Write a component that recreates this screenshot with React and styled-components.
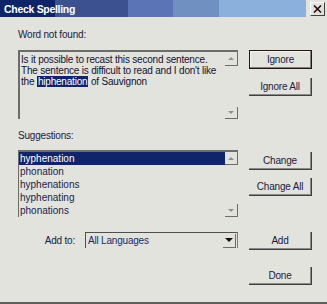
import React from "react";
import styled, { createGlobalStyle } from "styled-components";

const Global = createGlobalStyle`
  html, body { margin: 0; padding: 0; background: #e1e3dc; }
  body { font-family: "Liberation Sans", Arial, sans-serif; }
  * { box-sizing: border-box; }
`;

const Window = styled.div`
  width: 327px;
  height: 304px;
  background: #e1e3dc;
  border-bottom: 2px solid #5e5e5e;
  display: flex;
  flex-direction: column;
  color: #1a1a3c;
  font-size: 10px;
  letter-spacing: -0.2px;
`;

const TitleRow = styled.div`
  display: flex;
  align-items: flex-start;
  height: 17px;
`;

const TitleBar = styled.div`
  width: 306px;
  height: 17px;
  display: flex;
  align-items: center;
  padding-left: 4px;
  color: #fff;
  font-weight: bold;
  font-size: 10.5px;
  letter-spacing: -0.3px;
  background: linear-gradient(
    to right,
    #0e2468 0px, #0e2468 55px,
    #3b5190 55px, #3b5190 128px,
    #5a74b6 128px, #5a74b6 173px,
    #7190c2 173px, #7190c2 219px,
    #8cb0dc 219px, #8cb0dc 306px
  );
`;

const CloseBtn = styled.div`
  margin-left: 4px;
  margin-top: 2px;
  width: 15px;
  height: 14px;
  border: 1px solid;
  border-color: #ffffff #404040 #404040 #ffffff;
  display: flex;
  align-items: center;
  justify-content: center;
`;

const Body = styled.div`
  display: flex;
  flex-direction: column;
  padding-left: 18px;
`;

const Label = styled.div`
  height: 12px;
  line-height: 12px;
  margin-top: ${(p) => p.$mt}px;
  white-space: nowrap;
`;

const Section = styled.div`
  display: flex;
  gap: 11px;
  margin-top: ${(p) => p.$mt}px;
`;

const TextBox = styled.div`
  width: 220px;
  height: 69px;
  border-top: 2px solid #6c6c6c;
  border-left: 2px solid #6c6c6c;
  display: flex;
`;

const TextContent = styled.div`
  flex: 1;
  padding: 2px 0 0 1px;
  line-height: 11px;
  color: #121230;
`;

const Mark = styled.span`
  background: #10246a;
  color: #fff;
  padding: 0 1px;
`;

const ScrollCol = styled.div`
  width: 13px;
  display: flex;
  flex-direction: column;
  justify-content: space-between;
`;

const ScrollBtn = styled.div`
  height: ${(p) => p.$h}px;
  border-right: 1px solid #6c6c6c;
  border-bottom: 1px solid #6c6c6c;
  display: flex;
  align-items: center;
  justify-content: center;
`;

const Arrow = styled.div`
  width: 0;
  height: 0;
  border-left: ${(p) => p.$s || 3}px solid transparent;
  border-right: ${(p) => p.$s || 3}px solid transparent;
  ${(p) =>
    p.$down
      ? `border-top: ${p.$s || 3}px solid ${p.$c || "#909090"};`
      : `border-bottom: ${p.$s || 3}px solid ${p.$c || "#909090"};`}
`;

const ButtonCol = styled.div`
  width: 63px;
  display: flex;
  flex-direction: column;
  gap: ${(p) => p.$gap}px;
  padding-top: ${(p) => p.$pt || 0}px;
`;

const Button = styled.div`
  width: 63px;
  height: ${(p) => (p.$default ? 19 : 18)}px;
  display: flex;
  align-items: center;
  justify-content: center;
  color: #1a1a44;
  border-right: 1px solid #404040;
  border-bottom: 1px solid #404040;
  box-shadow: inset -1px -1px 0 #8a8a8a;
  ${(p) =>
    p.$default &&
    `border: 1px solid #2a1212; box-shadow: inset -1px -1px 0 #808080, inset 1px 1px 0 #f4f4f4;`}
`;

const List = styled.div`
  width: 220px;
  height: 67px;
  border-top: 2px solid #6c6c6c;
  border-left: 1px solid #6c6c6c;
  display: flex;
`;

const Rows = styled.div`
  flex: 1;
  display: flex;
  flex-direction: column;
`;

const Row = styled.div`
  height: 13px;
  line-height: 13px;
  padding-left: 1px;
  letter-spacing: 0;
  color: ${(p) => (p.$sel ? "#ffffff" : "#1c1c50")};
  background: ${(p) => (p.$sel ? "#10246a" : "transparent")};
`;

const AddRow = styled.div`
  display: flex;
  gap: 11px;
  margin-top: 15px;
`;

const AddLeft = styled.div`
  width: 220px;
  display: flex;
  align-items: flex-start;
  justify-content: flex-end;
  gap: 10px;
`;

const AddLabel = styled.div`
  height: 16px;
  line-height: 17px;
`;

const Select = styled.div`
  width: 153px;
  height: 16px;
  border-top: 1px solid #505050;
  border-left: 1px solid #505050;
  border-right: 1px solid #808080;
  display: flex;
  align-items: center;
`;

const SelectText = styled.div`
  flex: 1;
  padding-left: 2px;
  color: #1c2a6a;
`;

const DropBtn = styled.div`
  width: 13px;
  height: 14px;
  margin-right: 1px;
  border-right: 1px solid #6c6c6c;
  border-bottom: 1px solid #6c6c6c;
  display: flex;
  align-items: center;
  justify-content: center;
`;

const DoneRow = styled.div`
  display: flex;
  padding-left: 231px;
  margin-top: 17px;
`;

export default function App() {
  const suggestions = ["hyphenation", "phonation", "hyphenations", "hyphenating", "phonations"];
  return (
    <>
      <Global />
      <Window>
        <TitleRow>
          <TitleBar>Check Spelling</TitleBar>
          <CloseBtn>
            <svg width="9" height="8" viewBox="0 0 9 8">
              <path d="M1 0.5 L8 7.5 M8 0.5 L1 7.5" stroke="#2a0a0a" strokeWidth="1.6" />
            </svg>
          </CloseBtn>
        </TitleRow>
        <Body>
          <Label $mt={12}>Word not found:</Label>
          <Section $mt={9}>
            <TextBox>
              <TextContent>
                Is it possible to recast this second sentence.
                <br />
                The sentence is difficult to read and I don't like
                <br />
                the <Mark>hiphenation</Mark> of Sauvignon
              </TextContent>
              <ScrollCol>
                <ScrollBtn $h={14}>
                  <Arrow />
                </ScrollBtn>
                <ScrollBtn $h={12}>
                  <Arrow $down />
                </ScrollBtn>
              </ScrollCol>
            </TextBox>
            <ButtonCol $gap={9}>
              <Button $default>Ignore</Button>
              <Button>Ignore All</Button>
            </ButtonCol>
          </Section>
          <Label $mt={11}>Suggestions:</Label>
          <Section $mt={8}>
            <List>
              <Rows>
                {suggestions.map((s, i) => (
                  <Row key={s} $sel={i === 0}>
                    {s}
                  </Row>
                ))}
              </Rows>
              <ScrollCol>
                <ScrollBtn $h={13}>
                  <Arrow />
                </ScrollBtn>
                <ScrollBtn $h={13}>
                  <Arrow $down />
                </ScrollBtn>
              </ScrollCol>
            </List>
            <ButtonCol $gap={8} $pt={2}>
              <Button>Change</Button>
              <Button>Change All</Button>
            </ButtonCol>
          </Section>
          <AddRow>
            <AddLeft>
              <AddLabel>Add to:</AddLabel>
              <Select>
                <SelectText>All Languages</SelectText>
                <DropBtn>
                  <Arrow $down $s={4} $c="#1a0a0a" />
                </DropBtn>
              </Select>
            </AddLeft>
            <Button>Add</Button>
          </AddRow>
          <DoneRow>
            <Button>Done</Button>
          </DoneRow>
        </Body>
      </Window>
    </>
  );
}
